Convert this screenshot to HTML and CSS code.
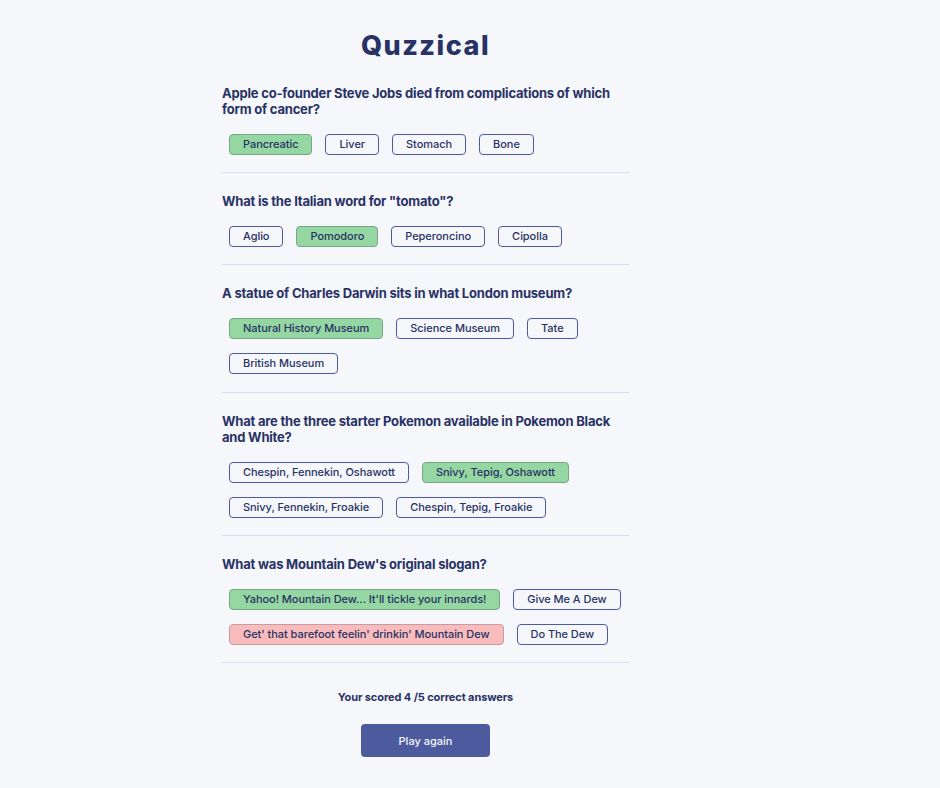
FILE: index.html
```html
<!DOCTYPE html>
<html>
<head>
<meta charset="utf-8">
<link rel="stylesheet" href="styles.css">
</head>
<body>
<main class="quiz">
  <h1 class="title">Quzzical</h1>

  <section class="question">
    <h2 class="q-text">Apple co-founder Steve Jobs died from complications of which form of cancer?</h2>
    <div class="answers">
      <button class="answer correct">Pancreatic</button>
      <button class="answer">Liver</button>
      <button class="answer">Stomach</button>
      <button class="answer">Bone</button>
    </div>
  </section>

  <section class="question">
    <h2 class="q-text">What is the Italian word for "tomato"?</h2>
    <div class="answers">
      <button class="answer">Aglio</button>
      <button class="answer correct">Pomodoro</button>
      <button class="answer">Peperoncino</button>
      <button class="answer">Cipolla</button>
    </div>
  </section>

  <section class="question">
    <h2 class="q-text">A statue of Charles Darwin sits in what London museum?</h2>
    <div class="answers">
      <button class="answer correct">Natural History Museum</button>
      <button class="answer">Science Museum</button>
      <button class="answer">Tate</button>
      <button class="answer">British Museum</button>
    </div>
  </section>

  <section class="question">
    <h2 class="q-text">What are the three starter Pokemon available in Pokemon Black and White?</h2>
    <div class="answers">
      <button class="answer">Chespin, Fennekin, Oshawott</button>
      <button class="answer correct">Snivy, Tepig, Oshawott</button>
      <button class="answer">Snivy, Fennekin, Froakie</button>
      <button class="answer">Chespin, Tepig, Froakie</button>
    </div>
  </section>

  <section class="question">
    <h2 class="q-text">What was Mountain Dew's original slogan?</h2>
    <div class="answers">
      <button class="answer correct">Yahoo! Mountain Dew... It'll tickle your innards!</button>
      <button class="answer">Give Me A Dew</button>
      <button class="answer wrong">Get' that barefoot feelin' drinkin' Mountain Dew</button>
      <button class="answer">Do The Dew</button>
    </div>
  </section>

  <footer class="result">
    <p class="score">Your scored 4 /5 correct answers</p>
    <button class="play">Play again</button>
  </footer>
</main>
</body>
</html>
```
FILE: styles.css
```css
* { box-sizing: border-box; }
html, body {
  margin: 0;
  padding: 0;
  background: #f5f7fb;
}
body {
  font-family: Inter, "Noto Sans", sans-serif;
  color: #293264;
}
.quiz {
  width: 407px;
  margin-left: 222px;
  padding-top: 29px;
}
.title {
  margin: 0 0 22px 0;
  text-align: center;
  font-size: 27px;
  line-height: 34px;
  font-weight: 800;
  letter-spacing: 1.5px;
  color: #293264;
}
.question {
  padding: 0 0 17px 0;
  margin-bottom: 20px;
  border-bottom: 1px solid #dbdef0;
}
.question:nth-of-type(3) {
  padding-bottom: 18px;
}
.q-text {
  margin: 0 0 17px 0;
  font-size: 13px;
  line-height: 16px;
  font-weight: 700;
  letter-spacing: -0.2px;
}
.answers {
  display: flex;
  flex-wrap: wrap;
  column-gap: 13px;
  row-gap: 14px;
  padding-left: 7px;
}
.answer {
  font-family: Inter, "Noto Sans", sans-serif;
  font-size: 11px;
  line-height: 13px;
  font-weight: 500;
  letter-spacing: -0.05px;
  color: #293264;
  background: transparent;
  border: 1px solid #4d5b9e;
  border-radius: 4px;
  padding: 3px 13px;
  height: 21px;
}
.answer.correct {
  background: #94d7a2;
  border-color: #7aa586;
}
.answer.wrong {
  background: #f8bcbc;
  border-color: #c99aa5;
}
.result {
  display: flex;
  flex-direction: column;
  align-items: center;
  padding-top: 7px;
}
.score {
  margin: 0 0 20px 0;
  font-size: 11px;
  line-height: 14px;
  font-weight: 700;
  letter-spacing: -0.1px;
}
.play {
  font-family: Inter, "Noto Sans", sans-serif;
  width: 129px;
  height: 33px;
  background: #4d5b9e;
  color: #f5f7fb;
  border: none;
  border-radius: 4px;
  font-size: 11px;
  font-weight: 500;
}
```
